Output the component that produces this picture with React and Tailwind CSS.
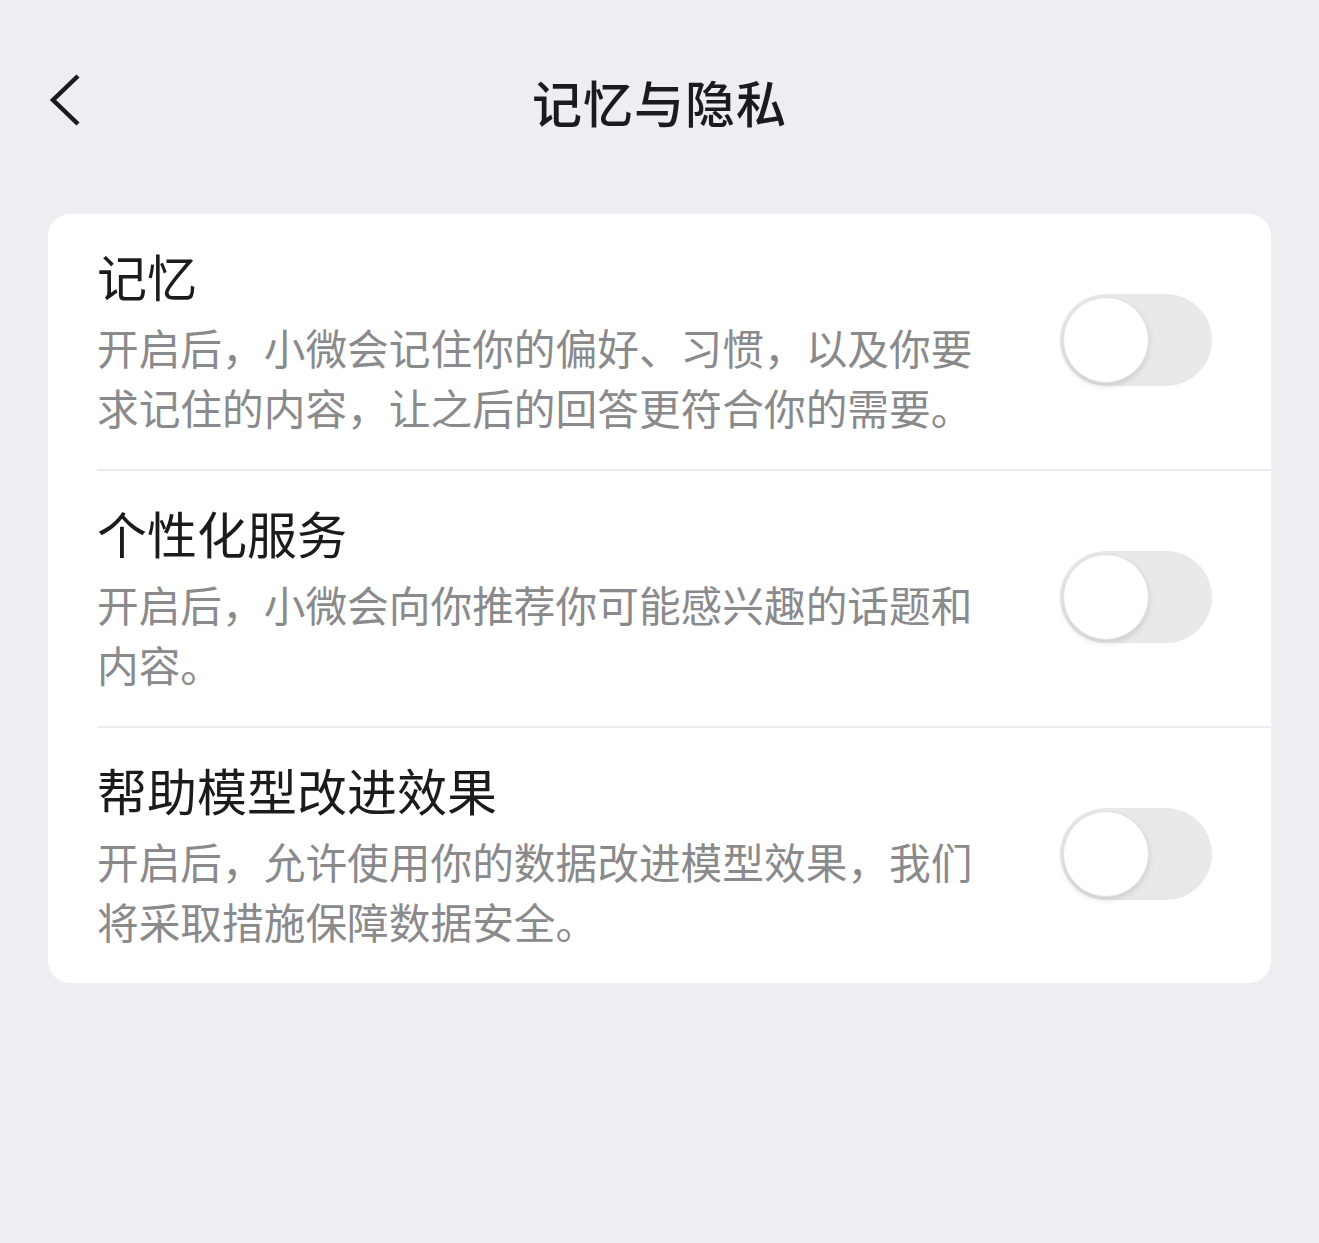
const items = [
  {
    id: 1,
    title: "记忆",
    desc: "开启后，小微会记住你的偏好、习惯，以及你要求记住的内容，让之后的回答更符合你的需要。",
  },
  {
    id: 2,
    title: "个性化服务",
    desc: "开启后，小微会向你推荐你可能感兴趣的话题和内容。",
  },
  {
    id: 3,
    title: "帮助模型改进效果",
    desc: "开启后，允许使用你的数据改进模型效果，我们将采取措施保障数据安全。",
  },
];

function Toggle() {
  return (
    <div className="w-[152px] h-[92px] rounded-full bg-[#e9e9eb] p-[3px] flex items-center shrink-0">
      <div className="w-[86px] h-[86px] rounded-full bg-white border border-[#e2e2e4] shadow-[0_3px_6px_rgba(0,0,0,0.12)]" />
    </div>
  );
}

export default function App() {
  return (
    <div
      className="min-h-[1243px] w-full bg-[#ededf2] text-[#1b1b1d]"
      style={{ fontFamily: '"Noto Sans CJK SC", "Noto Sans", sans-serif' }}
    >
      <header className="h-[206px] pb-[4px] flex items-center justify-center relative">
        <button className="absolute left-[48px] top-[72px] w-[34px] h-[56px] flex items-center">
          <svg width="34" height="56" viewBox="0 0 34 56" fill="none">
            <polyline
              points="30,4 5,28 30,52"
              stroke="#1b1b1d"
              strokeWidth="4.5"
              strokeLinecap="butt"
              strokeLinejoin="miter"
            />
          </svg>
        </button>
        <h1 className="text-[50px] font-medium leading-none tracking-[1px]">记忆与隐私</h1>
      </header>

      <div className="px-[48px] mt-[8px]">
        <div className="bg-white rounded-[22px] pl-[49px]">
          {items.map((item, i) => (
            <div
              key={item.id}
              className={
                "flex items-center justify-between pr-[59px] pt-[29px] pb-[32px] " +
                (i < items.length - 1 ? "border-b-2 border-[#ebebee]" : "")
              }
            >
              <div className="w-[890px]">
                <div className="text-[50px] leading-[64px]">{item.title}</div>
                <div className="mt-[10px] text-[41.7px] leading-[60px] text-[#8a8a8c]">
                  {item.desc}
                </div>
              </div>
              <Toggle />
            </div>
          ))}
        </div>
      </div>
    </div>
  );
}
